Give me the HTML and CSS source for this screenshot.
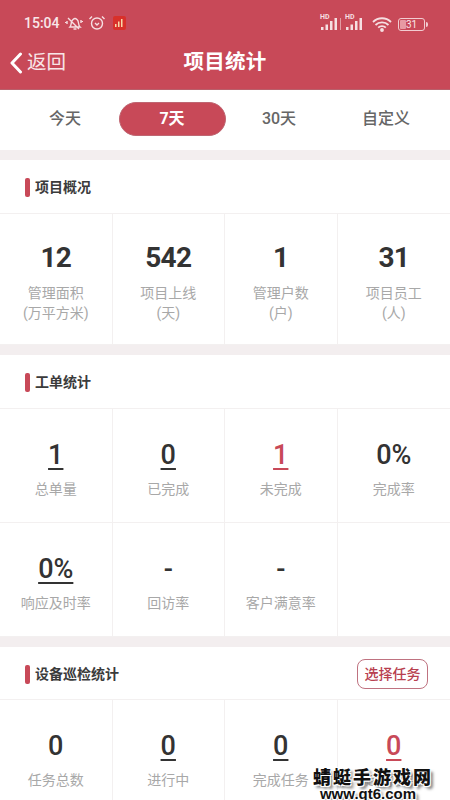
FILE: index.html
```html
<!DOCTYPE html>
<html lang="zh-CN">
<head>
<meta charset="utf-8">
<title>项目统计</title>
<link rel="stylesheet" href="styles.css">
</head>
<body>
<div class="page">
  <header class="header">
    <div class="status">
      <div class="status-left">
        <span class="time">15:04</span>
        <svg class="ic" width="18" height="16" viewBox="0 0 18 16" fill="none" stroke="#f6dfe2" stroke-width="1.4"><path d="M5 12c1-1 1-3 1.500-5S9 3.500 10 3.500s3 1.500 3.300 3.500.5 4 1.700 5zM8.500 14h3M3 3l11 11M2 6v3M16 5v3M0.500 7v1M17.500 6v1"/></svg>
        <svg class="ic" width="18" height="16" viewBox="0 0 18 16" fill="none" stroke="#f6dfe2" stroke-width="1.4"><circle cx="9" cy="8.500" r="5.500"/><path d="M1.500 4L4 1.500M16.500 4L14 1.500M7 8l2 2 2-2"/></svg>
        <span class="app-badge"><svg width="10" height="10" viewBox="0 0 10 10" fill="#f8d9a8"><path d="M1 6h1.500v3H1zM4 3.500h1.500V9H4zM7 1h1.500v8H7z"/></svg></span>
      </div>
      <div class="status-right">
        <span class="signal"><i class="hd">HD</i><svg width="22" height="15" viewBox="0 0 22 15" fill="#f6dfe2"><path d="M1 11h2.500v3H1zM5.500 8.500H8V14H5.500zM10 5h2.500v9H10zM14.500 2H17v12h-2.500z"/><path d="M20 2h1v12h-1z" opacity=".55"/></svg></span>
        <span class="signal"><i class="hd">HD</i><svg width="22" height="15" viewBox="0 0 22 15" fill="#f6dfe2"><path d="M1 11h2.500v3H1zM5.500 8.500H8V14H5.500zM10 5h2.500v9H10zM14.500 2H17v12h-2.500z"/></svg></span>
        <svg class="ic" width="20" height="15" viewBox="0 0 20 15" fill="none" stroke="#f6dfe2" stroke-width="1.800"><path d="M1 5c5-5 13-5 18 0M3.500 8c3.500-3.500 9.500-3.500 13 0M6.200 10.700c2-2 5.600-2 7.600 0"/><circle cx="10" cy="13" r="1" fill="#f6dfe2"/></svg>
        <span class="battery"><span class="battery-num">31</span></span>
      </div>
    </div>
    <div class="navbar">
      <div class="back">
        <svg width="14" height="22" viewBox="0 0 14 22" fill="none" stroke="#fff" stroke-width="3" stroke-linecap="round" stroke-linejoin="round"><path d="M11.500 2L3 11l8.500 9"/></svg>
        <span>返回</span>
      </div>
      <div class="title">项目统计</div>
    </div>
  </header>

  <nav class="tabs">
    <div class="tab">今天</div>
    <div class="tab tab-on">7天</div>
    <div class="tab">30天</div>
    <div class="tab">自定义</div>
  </nav>

  <section class="section">
    <div class="sec-head"><span class="sec-title">项目概况</span></div>
    <div class="grid">
      <div class="cell cell-tall"><div class="num strong">12</div><div class="lbl">管理面积<br>(万平方米)</div></div>
      <div class="cell cell-tall"><div class="num strong">542</div><div class="lbl">项目上线<br>(天)</div></div>
      <div class="cell cell-tall"><div class="num strong">1</div><div class="lbl">管理户数<br>(户)</div></div>
      <div class="cell cell-tall"><div class="num strong">31</div><div class="lbl">项目员工<br>(人)</div></div>
    </div>
  </section>

  <section class="section">
    <div class="sec-head"><span class="sec-title">工单统计</span></div>
    <div class="grid">
      <div class="cell"><div class="num link">1</div><div class="lbl">总单量</div></div>
      <div class="cell"><div class="num link">0</div><div class="lbl">已完成</div></div>
      <div class="cell"><div class="num link red">1</div><div class="lbl">未完成</div></div>
      <div class="cell"><div class="num">0%</div><div class="lbl">完成率</div></div>
      <div class="cell"><div class="num link">0%</div><div class="lbl">响应及时率</div></div>
      <div class="cell"><div class="num">-</div><div class="lbl">回访率</div></div>
      <div class="cell"><div class="num">-</div><div class="lbl">客户满意率</div></div>
      <div class="cell"></div>
    </div>
  </section>

  <section class="section">
    <div class="sec-head"><span class="sec-title">设备巡检统计</span><span class="pick">选择任务</span></div>
    <div class="grid">
      <div class="cell"><div class="num">0</div><div class="lbl">任务总数</div></div>
      <div class="cell"><div class="num link">0</div><div class="lbl">进行中</div></div>
      <div class="cell"><div class="num link">0</div><div class="lbl">完成任务</div></div>
      <div class="cell"><div class="num link red">0</div><div class="lbl">超时任务</div></div>
    </div>
  </section>

  <div class="watermark">
    <div class="wm-cn">蜻蜓手游戏网</div>
    <div class="wm-url">www.qt6.com</div>
  </div>
</div>
</body>
</html>
```

FILE: styles.css
```css
* { box-sizing: border-box; }
html, body { margin: 0; padding: 0; }
body {
  width: 450px;
  height: 800px;
  overflow: hidden;
  background: #f3eeef;
  font-family: Roboto, "Noto Sans CJK SC", sans-serif;
}
.page { position: relative; width: 450px; height: 800px; overflow: hidden; }

.header { height: 90px; background: #c84958; color: #fff; border-bottom: 1px solid #b9606b; }
.status {
  height: 44px;
  padding: 9px 0 0 24px;
  display: flex;
  justify-content: space-between;
}
.status-left, .status-right { display: flex; align-items: flex-start; }
.status-left { gap: 5px; height: 28px; align-items: center; }
.status-right { gap: 3px; height: 28px; align-items: center; padding-right: 25px; }
.time { font-size: 14px; font-weight: 500; color: #f8e6e8; }
.ic { display: block; }
.status-right .ic { margin-left: 2px; margin-top: 2px; }
.app-badge {
  width: 13px; height: 14px; margin-left: 2px;
  background: #d8302a; border-radius: 2px;
  display: flex; align-items: center; justify-content: center;
}
.signal { position: relative; display: block; width: 22px; height: 16px; margin-top: 2px; }
.signal svg { display: block; }
.hd {
  position: absolute; left: 0; top: -2px;
  font: normal 700 7px/7px Roboto, sans-serif; color: #f6dfe2;
}
.battery {
  position: relative; width: 27px; height: 13px;
  border: 1px solid #f2ccd1; border-radius: 3px;
  display: flex; align-items: center; justify-content: center;
  margin-left: 3px; margin-top: 2px;
}
.battery::before {
  content: ""; position: absolute; left: 1px; top: 1px; bottom: 1px; width: 6px;
  background: #e79aa3; border-radius: 1px;
}
.battery::after {
  content: ""; position: absolute; right: -4px; top: 3px; width: 2px; height: 5px;
  background: #f2ccd1; border-radius: 0 2px 2px 0;
}
.battery-num { position: relative; font-size: 10px; line-height: 11px; color: #f8e6e8; }

.navbar { position: relative; height: 45px; display: flex; align-items: center; justify-content: center; }
.back {
  position: absolute; left: 9px; top: 6px;
  display: flex; align-items: center; gap: 4px;
  font-size: 19.500px; line-height: 26px; color: #f8e6e8;
}
.back svg { display: block; }
.title { font-size: 20.500px; font-weight: 700; line-height: 30px; margin-top: -9px; letter-spacing: .2px; }

.tabs {
  height: 60px; background: #fff;
  padding: 0 11.500px;
  display: grid; grid-template-columns: repeat(4, 107px);
  align-items: center;
}
.tab { text-align: center; font-size: 16px; line-height: 34px; font-weight: 500; color: #666; position: relative; top: -1px; }
.tab-on {
  height: 34px; background: #c84958; color: #fff;
  border: 1px solid #bf6672; line-height: 32px;
  border-radius: 17px; font-weight: 700;
}

.section { margin-top: 10px; background: #fff; }
.sec-head {
  height: 53.500px; padding: 2px 22px 0 25px;
  display: flex; align-items: center; justify-content: space-between;
  border-bottom: 1px solid #f3f0f0;
}
.sec-title {
  display: block;
  font-size: 14px; font-weight: 700; line-height: 20px; color: #3b3b3b;
  padding-left: 10px; position: relative;
}
.sec-title::before {
  content: ""; position: absolute; left: 0; top: 1px;
  width: 5px; height: 19px; border-radius: 2px; background: #c84958;
}
.pick {
  width: 71px; height: 30px;
  border: 1px solid #bf7280; border-radius: 8px;
  font-size: 14px; font-weight: 500; line-height: 28px; text-align: center;
  color: #b8404f;
}
.grid { display: grid; grid-template-columns: repeat(4, 112.500px); }
.cell {
  height: 114px;
  padding-top: 26px;
  text-align: center;
  border-right: 1px solid #f3f0f0;
  border-bottom: 1px solid #f3f0f0;
}
.cell-tall { height: 131.500px; padding-top: 24px; }
.cell:nth-child(4n) { border-right: 0; }
.num { font-size: 27px; font-weight: 500; line-height: 40px; color: #333; height: 40px; }
.strong { font-weight: 700; font-size: 28px; letter-spacing: -.7px; margin-bottom: 5px; }
.link { text-decoration: underline; text-decoration-thickness: 2px; text-underline-offset: 4px; }
.red { color: #c84958; }
.lbl { margin-top: 4px; font-size: 14px; line-height: 20px; color: #a8a8a8; }

.watermark {
  position: absolute; left: 312px; top: 764px; width: 122px; text-align: center;
  color: #111; font-weight: 900;
  text-shadow: 1px 1px 0 #fff, -1px -1px 0 #fff, 1px -1px 0 #fff, -1px 1px 0 #fff, 3px 3px 3px #777;
}
.wm-cn { font-size: 18px; line-height: 24px; white-space: nowrap; font-family: "Noto Sans CJK SC", sans-serif; letter-spacing: 2px; }
.wm-url { font: 700 15px/12px "Liberation Sans", sans-serif; white-space: nowrap; padding-right: 10px; }
```
